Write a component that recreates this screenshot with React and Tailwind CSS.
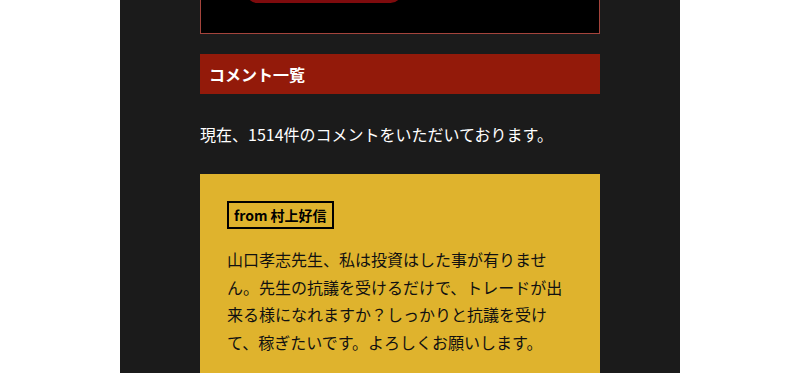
export default function App() {
  return (
    <div className="w-[800px] h-[373px] overflow-hidden bg-white flex justify-center" style={{ fontFamily: '"Noto Sans CJK JP", "Noto Sans", sans-serif' }}>
      <div className="w-[560px] bg-[#1b1b1b] flex flex-col items-center">
        <div className="w-[400px]">
          <div className="h-[34px] bg-black border-x border-b border-[#a5443c] overflow-hidden">
            <div className="ml-[45px] mt-[-20px] w-[156px] h-[23px] rounded-full bg-[#7e0b0d]"></div>
          </div>
          <div className="mt-5 h-[40px] bg-[#931a0a] flex items-center pl-[9px]">
            <h2 className="text-white font-bold text-[16px] leading-none">コメント一覧</h2>
          </div>
          <p className="mt-[28px] text-white text-[16px] leading-[24px]">現在、1514件のコメントをいただいております。</p>
          <div className="mt-[28px] bg-[#dfb32d] px-[27px] pt-[27px] pb-8">
            <div className="inline-flex items-center h-[28px] px-[5px] border-2 border-black text-black font-bold text-[14px] leading-none">from 村上好信</div>
            <p className="mt-[17px] text-[#111] text-[16px] leading-[1.72]">山口孝志先生、私は投資はした事が有りません。先生の抗議を受けるだけで、トレードが出来る様になれますか？しっかりと抗議を受けて、稼ぎたいです。よろしくお願いします。</p>
          </div>
        </div>
      </div>
    </div>
  );
}
